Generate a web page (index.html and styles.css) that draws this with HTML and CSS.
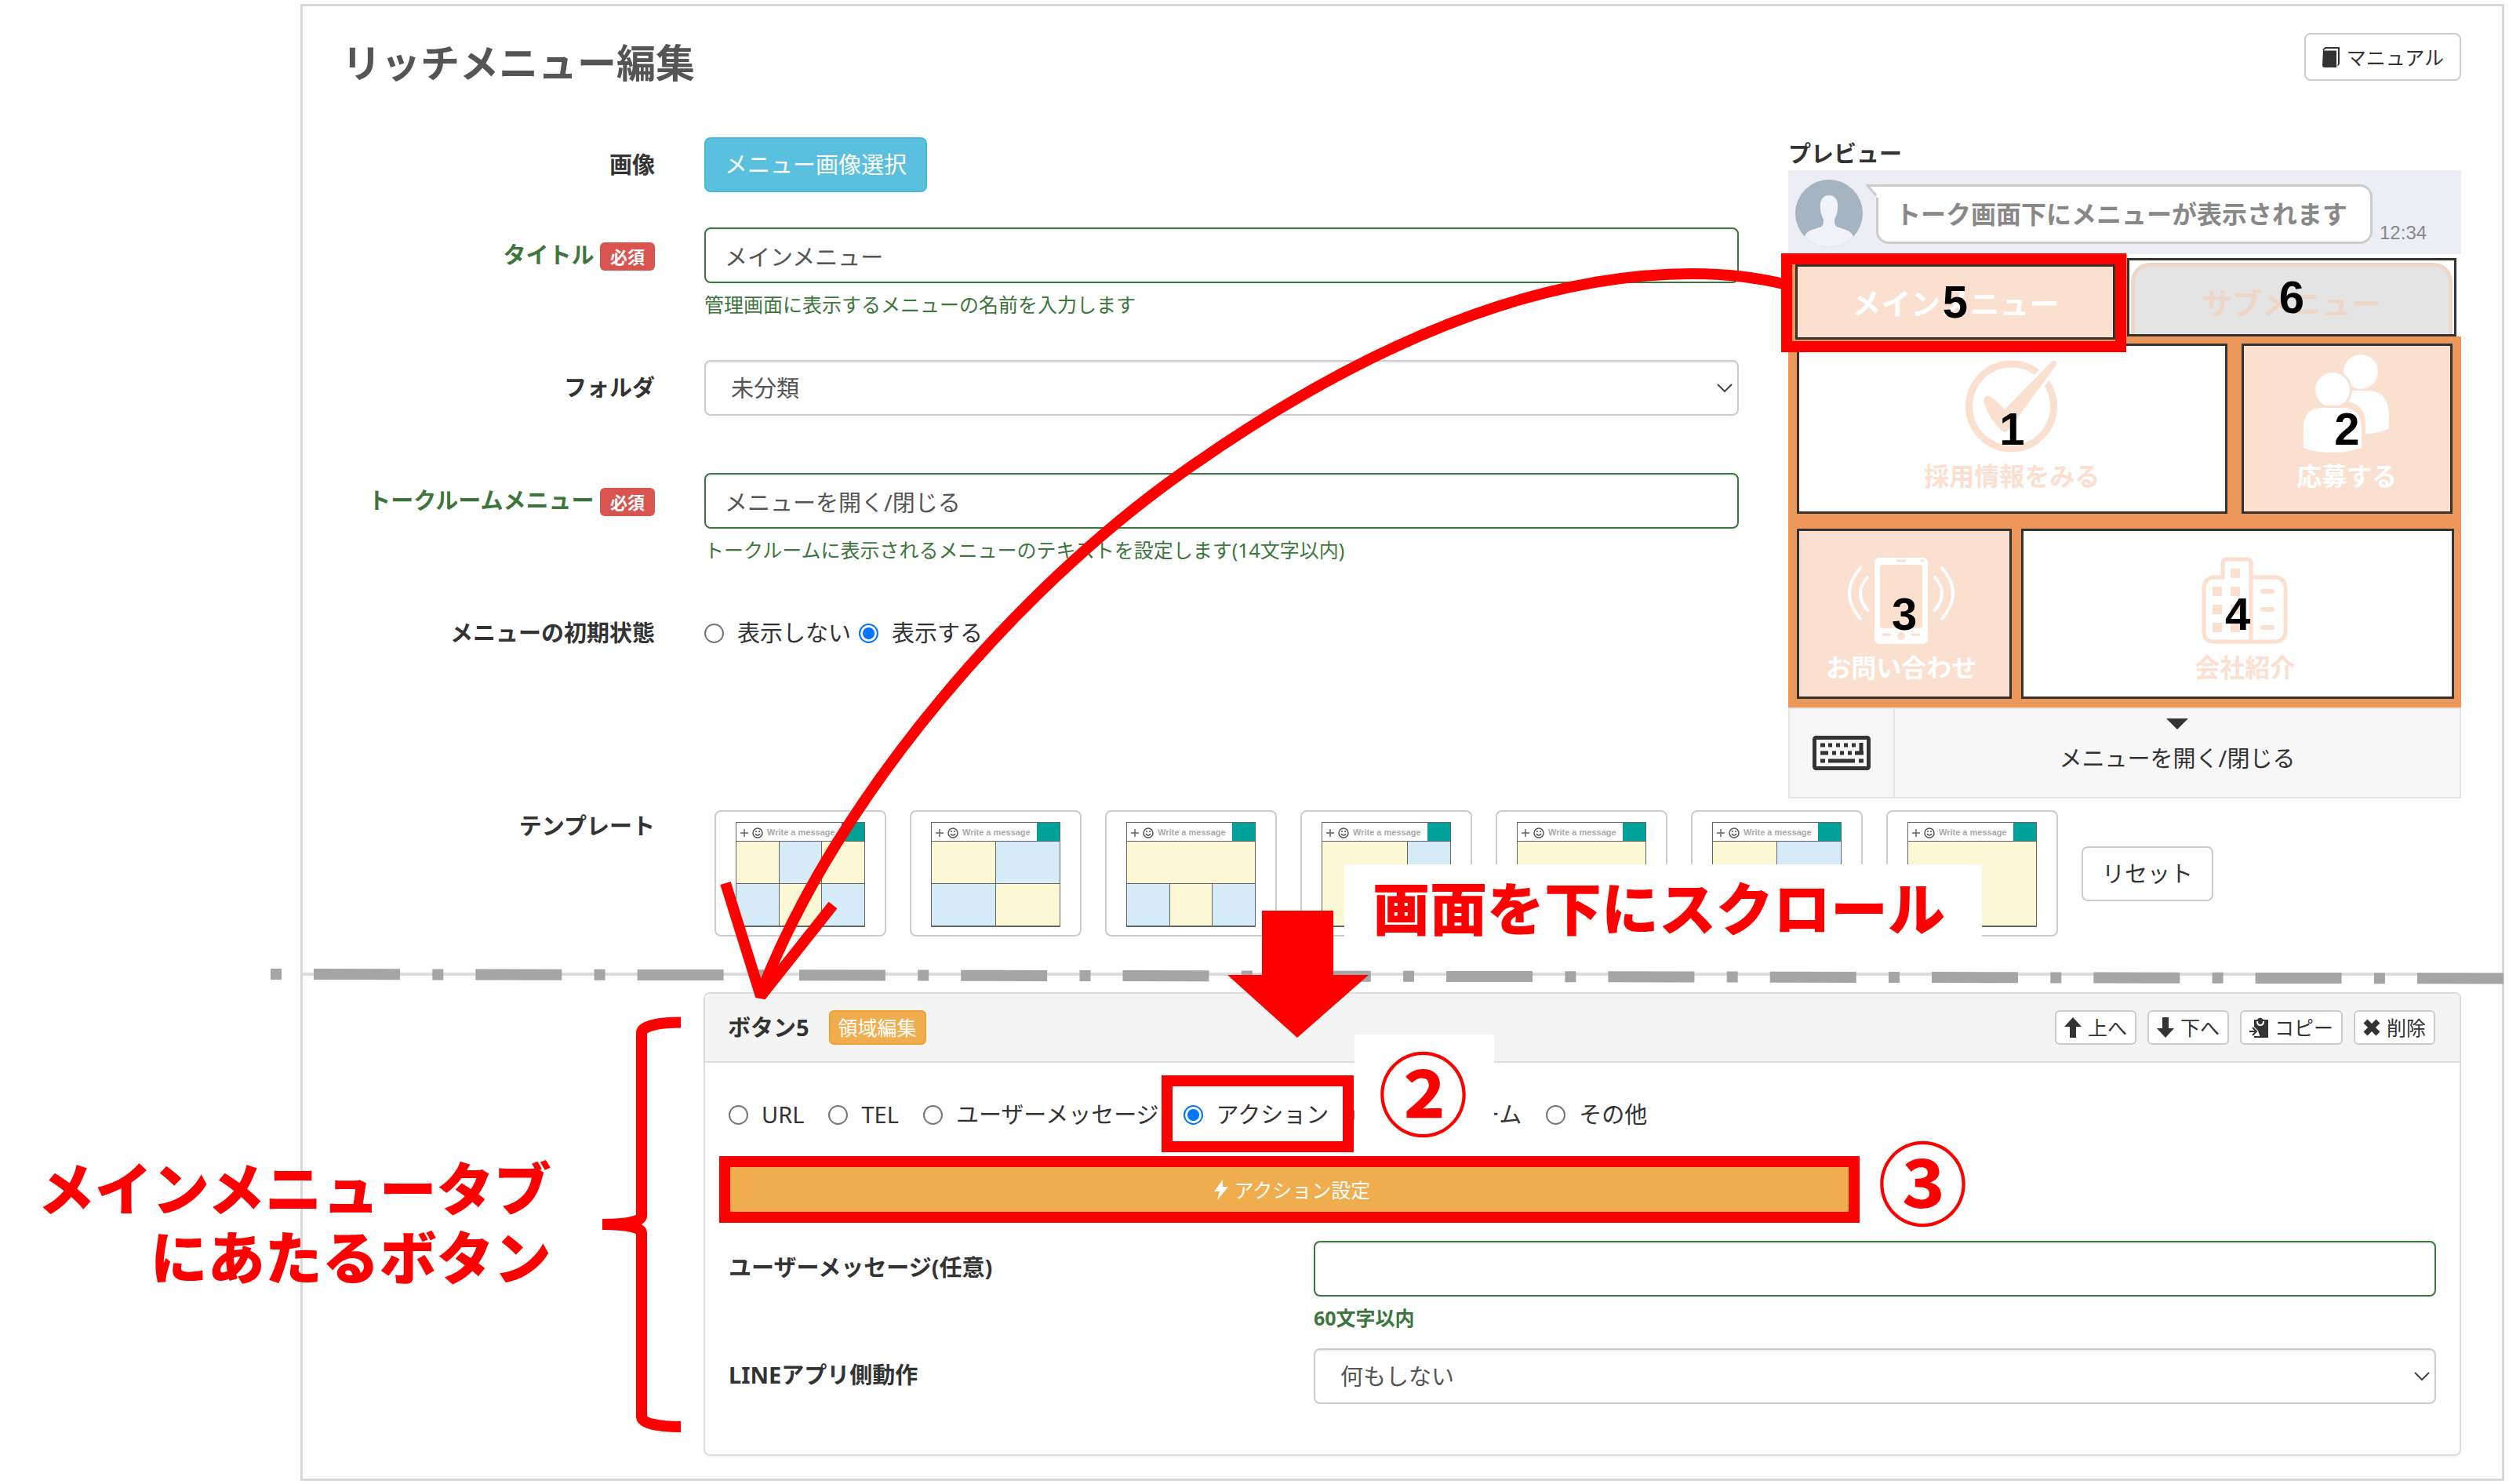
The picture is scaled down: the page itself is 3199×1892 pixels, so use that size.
FILE: index.html
```html
<!DOCTYPE html>
<html lang="ja">
<head>
<meta charset="utf-8">
<title>リッチメニュー編集</title>
<link rel="stylesheet" href="styles.css">
</head>
<body>
<svg class="defs" aria-hidden="true">
  <symbol id="chat-bar" viewBox="0 0 166 25">
    <rect x="0" y="0" width="166" height="25" fill="#fff"/>
    <path d="M10 8v10M5 13h10" stroke="#666" stroke-width="1.500" fill="none"/>
    <circle cx="27" cy="13" r="6" stroke="#555" stroke-width="1.500" fill="none"/>
    <path d="M24 14q3 4 6 0" stroke="#555" stroke-width="1.500" fill="none"/>
    <circle cx="25" cy="11" r="1" fill="#555"/><circle cx="29" cy="11" r="1" fill="#555"/>
    <rect x="134" y="0" width="32" height="25" fill="#00a198"/>
  </symbol>
</svg>

<main class="frame">
  <header class="page-head">
    <h1 class="title">リッチメニュー編集</h1>
    <button type="button" class="btn btn-manual">
      <svg width="24" height="26" viewBox="0 0 24 26"><path d="M2 4h17v22H4q-3 0-3-3z" fill="#333"/><path d="M2 4l3-3h17v20l-2 3" fill="none" stroke="#333" stroke-width="2"/><path d="M3 4h17v21" fill="none" stroke="#fff" stroke-width="1"/></svg>
      マニュアル
    </button>
  </header>

  <div class="top">
    <form class="form">
      <div class="row">
        <span class="label">画像</span>
        <div><button type="button" class="btn btn-info">メニュー画像選択</button></div>
      </div>
      <div class="row row-wide">
        <label class="label ok" for="f-title">タイトル <span class="required">必須</span></label>
        <div>
          <input id="f-title" class="control valid" type="text" value="メインメニュー">
          <p class="help">管理画面に表示するメニューの名前を入力します</p>
        </div>
      </div>
      <div class="row">
        <label class="label" for="f-folder">フォルダ</label>
        <div class="select-wrap">
          <select id="f-folder" class="control select"><option>未分類</option></select>
          <svg class="chevron" width="20" height="12" viewBox="0 0 20 12"><path d="M1 1l9 9 9-9" fill="none" stroke="#444" stroke-width="2"/></svg>
        </div>
      </div>
      <div class="row row-talk">
        <label class="label ok" for="f-talk">トークルームメニュー <span class="required">必須</span></label>
        <div>
          <input id="f-talk" class="control valid" type="text" value="メニューを開く/閉じる">
          <p class="help">トークルームに表示されるメニューのテキストを設定します(14文字以内)</p>
        </div>
      </div>
      <div class="row">
        <span class="label">メニューの初期状態</span>
        <div class="radios radios-tight">
          <label class="radio"><input type="radio" name="state">表示しない</label>
          <label class="radio"><input type="radio" name="state" checked>表示する</label>
        </div>
      </div>
    </form>

    <section class="preview">
      <h2 class="preview-title">プレビュー</h2>
      <div class="chat">
        <svg class="avatar" width="86" height="86" viewBox="0 0 86 86"><clipPath id="av"><circle cx="43" cy="43" r="43"/></clipPath><g clip-path="url(#av)"><rect width="86" height="86" fill="#a6b4c2"/><path d="M43 20c-8 0-12 7-11 15 0 9 3 13 4 16 0 5 0 7-3 9-10 4-19 4-22 15v11h64V75c-3-11-12-11-22-15-3-2-3-4-3-9 1-3 4-7 4-16 1-8-3-15-11-15z" fill="#f1f3f8"/></g></svg>
        <div class="bubble">トーク画面下にメニューが表示されます
          <svg class="tail" width="16" height="17" viewBox="0 0 16 17"><path d="M16 1.500H3L13.500 15V17H16z" fill="#fff"/><path d="M16 1.500H2L13 14" fill="none" stroke="#ccc" stroke-width="3"/></svg>
        </div>
        <span class="time">12:34</span>
      </div>
      <div class="map">
        <div class="map-tabs">
          <div class="tab-main"><div class="cell peach"><span class="tab-text white">メインメニュー</span><b class="num">5</b></div></div>
          <div class="tab-sub"><div class="cell"><span class="tab-text tab-shape">サブメニュー</span><b class="num">6</b></div></div>
        </div>
        <div class="map-row map-row1">
          <div class="cell tile">
            <svg width="120" height="120" viewBox="0 0 120 120"><circle cx="59.500" cy="60" r="54" fill="none" stroke="#fbe0d0" stroke-width="9"/><path d="M24 52Q25 46 31 47Q40 52 51 64L111 3Q118 0 117 7L56 90Q50 96 46 90Q28 72 24 52z" fill="#fbe0d0" stroke="#fff" stroke-width="8" paint-order="stroke"/></svg>
            <span class="tile-text">採用情報をみる</span><b class="num">1</b>
          </div>
          <div class="cell tile peach">
            <svg width="112" height="126" viewBox="0 0 112 126"><g fill="#fff"><circle cx="74" cy="22" r="22"/><path d="M58 46H86Q110 48 110 78V94Q98 101 80 101V85Q78 62 56 60z"/><g stroke="#fbe0d0" stroke-width="6" paint-order="stroke"><circle cx="38" cy="45" r="22"/><path d="M1 119V92Q2 68 24 68H54Q75 70 75 95V119Q56 125 38 125Q16 125 1 119z"/></g></g></svg>
            <span class="tile-text white">応募する</span><b class="num">2</b>
          </div>
        </div>
        <div class="map-row map-row2">
          <div class="cell tile tile-contact peach">
            <svg width="138" height="112" viewBox="0 0 138 112"><rect x="35" y="1" width="68" height="110" rx="6" fill="#fff"/><rect x="42" y="10" width="54" height="81" rx="4" fill="#fbe0d0"/><circle cx="69" cy="101" r="5" fill="#fbe0d0"/><path d="M46 99h9M83 99h9M64 5h10M95 5h2" stroke="#fbe0d0" stroke-width="3" stroke-linecap="round"/><g fill="none" stroke="#fff" stroke-width="4" stroke-linecap="round"><path d="M17 14Q-11 46 17 79M26 26Q8 46 26 68M121 14Q149 46 121 79M112 26Q130 46 112 68"/></g></svg>
            <span class="tile-text white">お問い合わせ</span><b class="num">3</b>
          </div>
          <div class="cell tile tile-company">
            <svg width="112" height="112" viewBox="0 0 112 112"><g fill="none" stroke="#fbe0d0" stroke-width="5"><path d="M64 108V8q0-5-5-5H33q-5 0-5 5V26H16Q4 28 4 40V94q0 14 12 14H94q14 0 14-14V40q0-12-12-14H66"/></g><g fill="#fbe0d0"><path d="M38 15h12v12H38zM38 38h12v12H38zM38 61h12v12H38zM38 84h12v12H38zM15 38h12v12H15zM15 61h12v12H15zM15 84h12v12H15z"/><rect x="76" y="41" width="18" height="6" rx="3"/><rect x="76" y="64" width="18" height="6" rx="3"/><rect x="76" y="87" width="18" height="6" rx="3"/></g></svg>
            <span class="tile-text">会社紹介</span><b class="num">4</b>
          </div>
        </div>
      </div>
      <div class="menu-bar">
        <div class="keyboard"><svg width="74" height="44" viewBox="0 0 74 44"><rect x="2.500" y="2.500" width="69" height="39" rx="2" fill="none" stroke="#333" stroke-width="5"/><path d="M10 12h6M20 12h5M30 12h5M40 12h5M50 12h5M10 22h10M25 22h5M35 22h5M45 22h5M54 22h11M10 32h6M20 32h34M59 32h6" stroke="#333" stroke-width="5"/><path d="M62 9v15" stroke="#333" stroke-width="5"/></svg></div>
        <div class="menu-toggle"><svg width="28" height="14" viewBox="0 0 28 14"><path d="M0 0h28L14 14z" fill="#333"/></svg><span>メニューを開く/閉じる</span></div>
      </div>
    </section>
  </div>

  <section class="templates">
    <span class="label">テンプレート</span>
    <div class="template-list">
      <button type="button" class="template"><span class="bar"><svg width="166" height="25"><use href="#chat-bar"/></svg><i>Write a message</i></span><span class="grid g6"><u></u><u class="b"></u><u></u><u class="b"></u><u></u><u class="b"></u></span></button>
      <button type="button" class="template"><span class="bar"><svg width="166" height="25"><use href="#chat-bar"/></svg><i>Write a message</i></span><span class="grid g4"><u></u><u class="b"></u><u class="b"></u><u></u></span></button>
      <button type="button" class="template"><span class="bar"><svg width="166" height="25"><use href="#chat-bar"/></svg><i>Write a message</i></span><span class="grid g6"><u class="full"></u><u class="b"></u><u></u><u class="b"></u></span></button>
      <button type="button" class="template"><span class="bar"><svg width="166" height="25"><use href="#chat-bar"/></svg><i>Write a message</i></span><span class="grid g6"><u class="big"></u><u class="b"></u><u class="b"></u></span></button>
      <button type="button" class="template"><span class="bar"><svg width="166" height="25"><use href="#chat-bar"/></svg><i>Write a message</i></span><span class="grid g4"><u class="wide"></u><u class="b wide"></u></span></button>
      <button type="button" class="template"><span class="bar"><svg width="166" height="25"><use href="#chat-bar"/></svg><i>Write a message</i></span><span class="grid g4"><u class="tall"></u><u class="b tall"></u></span></button>
      <button type="button" class="template"><span class="bar"><svg width="166" height="25"><use href="#chat-bar"/></svg><i>Write a message</i></span><span class="grid g4"><u class="wide tall"></u></span></button>
      <button type="button" class="btn btn-reset">リセット</button>
    </div>
  </section>

  <hr class="rule">

  <section class="panel">
    <header class="panel-head">
      <h2 class="panel-title">ボタン5</h2>
      <button type="button" class="btn btn-small btn-area">領域編集</button>
      <div class="tools">
        <button type="button" class="btn btn-small"><svg width="22" height="26" viewBox="0 0 22 26"><path d="M11 0l11 12h-7v14H7V12H0z" fill="#333"/></svg>上へ</button>
        <button type="button" class="btn btn-small"><svg width="22" height="26" viewBox="0 0 22 26"><path d="M11 26l11-12h-7V0H7v14H0z" fill="#333"/></svg>下へ</button>
        <button type="button" class="btn btn-small"><svg width="24" height="26" viewBox="0 0 24 26"><path d="M6 3h4q3-5 8 0h6v23H14l-3-9-5-5z" fill="#333"/><path d="M10 5q0 5 4 5t4-5" fill="none" stroke="#fff" stroke-width="2"/><path d="M0 18h7M4 13l5 5-5 5" fill="none" stroke="#333" stroke-width="2"/><path d="M6 25h10" stroke="#333" stroke-width="2"/></svg>コピー</button>
        <button type="button" class="btn btn-small"><svg width="22" height="22" viewBox="0 0 22 22"><path d="M3 3l16 16M19 3L3 19" stroke="#333" stroke-width="7"/></svg>削除</button>
      </div>
    </header>
    <div class="panel-body">
      <div class="radios">
        <label class="radio"><input type="radio" name="kind">URL</label>
        <label class="radio"><input type="radio" name="kind">TEL</label>
        <label class="radio"><input type="radio" name="kind">ユーザーメッセージ</label>
        <label class="radio"><input type="radio" name="kind" checked>アクション</label>
        <label class="radio"><input type="radio" name="kind">回答フォーム</label>
        <label class="radio"><input type="radio" name="kind">その他</label>
      </div>
      <button type="button" class="btn btn-action"><svg width="18" height="26" viewBox="0 0 18 26"><path d="M11 0L0 15h7L4 26 18 9h-7z" fill="#fff"/></svg>アクション設定</button>
      <div class="panel-row">
        <label class="panel-label" for="p-msg">ユーザーメッセージ(任意)</label>
        <div><input id="p-msg" class="control valid" type="text"><p class="help strong">60文字以内</p></div>
      </div>
      <div class="panel-row panel-row-line">
        <label class="panel-label" for="p-line">LINEアプリ側動作</label>
        <div class="select-wrap">
          <select id="p-line" class="control select"><option>何もしない</option></select>
          <svg class="chevron" width="20" height="12" viewBox="0 0 20 12"><path d="M1 1l9 9 9-9" fill="none" stroke="#444" stroke-width="2"/></svg>
        </div>
      </div>
    </div>
  </section>
</main>

<div class="notes">
  <div class="patch patch-scroll"><span class="note-text">画面を下にスクロール</span></div>
  <div class="patch patch-two"></div>
  <svg class="ink" width="3199" height="1892" viewBox="0 0 3199 1892" fill="none" stroke="#f00" stroke-width="14">
    <path d="M345 1242L3192 1247.500" stroke="#a5a5a5" stroke-dasharray="14 41 110 41.300"/>
    <path d="M1609 1161H1700V1243H1745L1654 1323L1565 1243H1609z" fill="#f00" stroke="none"/>
    <rect x="2278" y="330" width="426" height="112"/>
    <rect x="1488" y="1378" width="231" height="84"/>
    <rect x="924" y="1481" width="1440" height="71"/>
    <path d="M2278 363Q2222 349 2158 349C1960 349 1740 437 1504 605C1300 750 1070 1010 971 1264"/>
    <path d="M925 1126L970 1270L1062 1154" stroke-linejoin="bevel"/>
    <path d="M868 1303.500C840 1303.500 818 1308 818 1317V1550C818 1557 800 1561 768 1561C800 1561 818 1565 818 1572V1806C818 1815 840 1819 868 1819"/>
  </svg>
  <span class="circled circled-two">②</span>
  <span class="circled circled-three">③</span>
  <p class="note-text note-left">メインメニュータブ<br>にあたるボタン</p>
</div>
</body>
</html>
```
FILE: styles.css
```css
* { box-sizing: border-box; }

body {
  margin: 0;
  position: relative;
  background: #fff;
  color: #333;
  font: 29px/44px "Noto Sans", "Noto Sans CJK JP", sans-serif;
}

h1, h2, p { margin: 0; }
button, input, select { font: inherit; color: inherit; }
svg { display: block; flex: none; }
.defs { position: absolute; width: 0; height: 0; }

.frame {
  margin: 5px 6px 3px 383px;
  border: 3px solid #d9d9d9;
  padding: 34px 52px 29px 58px;
}

.page-head { display: flex; justify-content: space-between; align-items: flex-start; margin-left: -8px; }
.title { color: #555; font-size: 50px; line-height: 76px; }

.btn {
  display: inline-flex;
  align-items: center;
  justify-content: center;
  gap: 8px;
  border: 2px solid #ccc;
  border-radius: 8px;
  background: #fff;
  padding: 0 24px;
  white-space: nowrap;
}
.btn-manual { height: 61px; padding: 0 20px; font-size: 25px; gap: 8px; }
.btn-info { height: 70px; color: #fff; background: #5bc0de; border-color: #46b8da; }
.btn-reset { height: 70px; }
.btn-small { height: 44px; padding: 0 10px; border-radius: 6px; font-size: 25px; }

.top { display: grid; grid-template-columns: 1773fr 858fr; gap: 63px; margin-top: 57px; }
.row { display: grid; grid-template-columns: 391px 1fr; gap: 63px; margin-bottom: 45px; }
.row-wide { margin-bottom: 53px; }
.row-wide + .row { margin-bottom: 73px; }
.row-talk { margin-bottom: 53px; }

.label { text-align: right; font-weight: bold; line-height: 70px; white-space: nowrap; }
.ok { color: #3c763d; }
.required {
  display: inline-block;
  background: #d9534f;
  color: #fff;
  border-radius: 6px;
  padding: 0 13px;
  font-size: 22px;
  line-height: 36px;
}

.control {
  display: block;
  width: 100%;
  height: 71px;
  border: 2px solid #ccc;
  border-radius: 8px;
  background: #fff;
  padding: 0 24px;
  color: #555;
  box-shadow: inset 0 2px 2px rgba(0, 0, 0, .07);
}
.valid { border-color: #3c763d; }
.select { appearance: none; padding-left: 32px; }
.select-wrap { position: relative; }
.chevron { position: absolute; right: 8px; top: 30px; }
.help { margin-top: 9px; color: #3c763d; font-size: 25px; line-height: 36px; }
.strong { font-weight: bold; }

.radios { display: flex; gap: 31px; align-items: center; }
.radios-tight { gap: 10px; }
.radio { display: flex; align-items: center; gap: 17px; white-space: nowrap; }
.radio input {
  appearance: none;
  width: 25px;
  height: 25px;
  margin: 0;
  border: 2px solid #767676;
  border-radius: 50%;
  background: #fff;
}
.radio input:checked {
  border-color: #0075ff;
  background: radial-gradient(circle, #0075ff 7px, #fff 8px);
}

/* preview */
.preview { min-width: 0; }
.preview-title { font-size: 29px; line-height: 42px; }
.chat { display: flex; height: 107px; background: #edeef4; padding: 12px 9px; }
.bubble {
  position: relative;
  height: 76px;
  margin: 6px 0 0 17px;
  padding: 0 29px 0 22px;
  border: 3px solid #ccc;
  border-radius: 4px 16px 16px 16px;
  background: #fff;
  color: #888;
  font-size: 32px;
  font-weight: bold;
  line-height: 70px;
  white-space: nowrap;
}
.tail { position: absolute; left: -16px; top: -3px; }
.time { align-self: flex-end; margin-left: 9px; color: #888; font: 24px/30px "Liberation Sans", sans-serif; }

.map { background: #ee975a; padding-bottom: 11px; }
.map-tabs { display: grid; grid-template-columns: 432fr 426fr; align-items: start; }
.tab-main { padding: 13px 15px 0 9px; }
.tab-sub { background: #fff; padding: 5px 6px 0 0; }
.cell { position: relative; border: 3px solid #333; background: #fff; color: #fbe0d0; }
.tab-main .cell { height: 96px; }
.tab-sub .cell { height: 100px; }
.cell.peach { background: #fbe0d0; }
.white { color: #fff; }
.tab-text { display: block; text-align: center; font-size: 38px; font-weight: bold; line-height: 92px; }
.tab-shape {
  height: 91px;
  margin: 3px 2px 0;
  border: 5px solid #edd7c8;
  border-bottom: 0;
  border-radius: 24px 24px 0 0;
  background: #e4e4e4;
  color: #edd7c8;
}
.num {
  position: absolute;
  inset: 0;
  display: flex;
  align-items: center;
  justify-content: center;
  color: #000;
  font: bold 58px/58px "Liberation Sans", sans-serif;
}
.map-row { display: grid; }
.map-row1 { grid-template-columns: 548fr 269fr; gap: 18px; padding: 5px 11px 0; }
.map-row2 { grid-template-columns: 274fr 551fr; gap: 12px; padding: 19px 9px 0 11px; }
.tile { display: flex; flex-direction: column; align-items: center; justify-content: flex-end; gap: 9px; height: 217px; padding-bottom: 17px; }
.map-row1 .tile { padding-bottom: 25px; }
.tile-contact { padding-right: 8px; }
.tile-company { padding-left: 18px; }
.tile-text { font-size: 32px; font-weight: bold; line-height: 40px; }

.menu-bar { display: grid; grid-template-columns: 134px 1fr; height: 116px; border: 2px solid #e5e5e5; background: #f7f7f7; }
.keyboard { display: flex; align-items: center; justify-content: center; border-right: 2px solid #e5e5e5; }
.menu-toggle { display: flex; flex-direction: column; align-items: center; gap: 15px; padding-top: 12px; }

/* templates */
.templates { display: grid; grid-template-columns: 391px 1fr; gap: 63px; margin-top: 15px; }
.templates .label { line-height: 40px; }
.template-list { display: flex; align-items: center; gap: 30px; padding-left: 13px; }
.template {
  width: 219px;
  height: 161px;
  padding: 13px 25px 12px;
  border: 2px solid #ccc;
  border-radius: 8px;
  background: #fff;
}
.bar { position: relative; display: block; height: 25px; border: 1px solid #666; overflow: hidden; }
.bar i { position: absolute; left: 39px; top: 0; color: #aaa; font: bold 11px/24px "Liberation Sans", sans-serif; white-space: nowrap; }
.grid { display: grid; grid-auto-rows: 53px; gap: 1px; height: 109px; border: 1px solid #666; border-top: 0; background: #666; }
.g6 { grid-template-columns: repeat(3, 1fr); }
.g4 { grid-template-columns: repeat(2, 1fr); }
.grid u { background: #fcf7d5; }
.grid .b { background: #d5ebf7; }
.full { grid-column: span 3; }
.wide { grid-column: span 2; }
.tall { grid-row: span 2; }
.big { grid-column: span 2; grid-row: span 2; }

.rule { height: 4px; margin: 46px -52px 21px -58px; border: 0; background: #dcdcdc; }

/* button panel */
.panel { margin-left: 453px; border: 2px solid #ddd; border-radius: 8px; box-shadow: 0 2px 3px rgba(0, 0, 0, .06); }
.panel-head { display: flex; align-items: center; height: 88px; padding: 0 31px 0 29px; background: #f4f4f4; border-bottom: 2px solid #ddd; border-radius: 6px 6px 0 0; }
.panel-title { font-size: 29px; line-height: 44px; }
.btn-area { margin-left: 25px; background: #f0ad4e; border-color: #eea236; color: #fff; }
.tools { display: flex; gap: 14px; margin-left: auto; }
.panel-body { padding: 44px 30px 64px; }
.btn-action { width: 66%; height: 61px; margin: 43px 0 35px; background: #f0ad4e; border-color: #eea236; color: #fff; font-size: 25px; }
.panel-row { display: grid; grid-template-columns: 746fr 1431fr; }
.panel-row-line { margin-top: 21px; }
.panel-label { font-weight: bold; line-height: 68px; }

/* annotations over the page */
.notes { position: absolute; inset: 0; pointer-events: none; overflow: hidden; }
.ink { position: absolute; left: 0; top: 0; }
.patch { position: absolute; background: #fff; }
.patch-scroll { left: 1714px; top: 1102px; width: 813px; height: 98px; padding: 12px 36px; }
.patch-two { left: 1727px; top: 1319px; width: 178px; height: 140px; }
.note-text { color: #f00; font-size: 73px; font-weight: 900; line-height: 88px; white-space: nowrap; }
.note-left { position: absolute; left: 48px; top: 1471px; text-align: right; }
.circled { position: absolute; color: #f00; font-size: 115px; font-weight: bold; line-height: 120px; }
.circled-two { left: 1757px; top: 1335px; }
.circled-three { left: 2394px; top: 1449px; }
```
